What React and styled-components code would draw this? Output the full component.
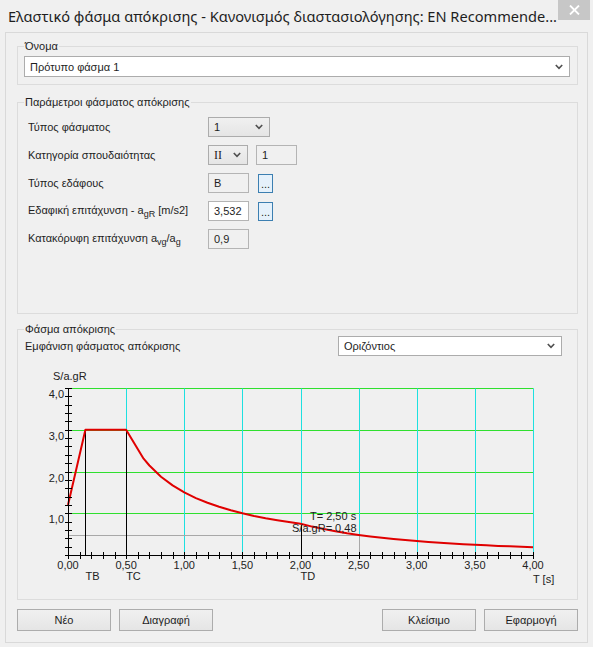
import React from "react";
import styled, { createGlobalStyle } from "styled-components";

const GlobalStyle = createGlobalStyle`
  body {
    margin: 0;
    background: #f0f0f0;
    font-family: "Liberation Sans", "Noto Sans", sans-serif;
  }
`;

const Window = styled.div`
  width: 593px;
  height: 647px;
  box-sizing: border-box;
  background: #f0f0f0;
  display: flex;
  flex-direction: column;
  overflow: hidden;
`;

const TitleBar = styled.div`
  height: 32px;
  flex-shrink: 0;
  display: flex;
  align-items: flex-start;
  justify-content: space-between;
  padding: 0 3px 0 8px;
`;

const Title = styled.div`
  flex: 1;
  min-width: 0;
  overflow: hidden;
  font-family: "Noto Sans", sans-serif;
  font-size: 14.6px;
  color: #1e1e1e;
  padding-top: 6px;
  white-space: nowrap;
`;

const CloseButton = styled.div`
  flex-shrink: 0;
  width: 32px;
  height: 20px;
  background: #c7c7c7;
  display: flex;
  align-items: center;
  justify-content: center;
`;

const Client = styled.div`
  flex: 1;
  margin: 0 5px 4px 5px;
  border: 1px solid #d9d9d9;
  display: flex;
  flex-direction: column;
  padding: 6px 9px 0 11px;
`;

const Group = styled.fieldset`
  margin: ${(p) => p.$top || 0}px 0 0 0;
  padding: 0 7px 7px 6px;
  border: 1px solid #dcdcdc;
  min-width: 0;
  box-sizing: border-box;
  height: ${(p) => (p.$height ? `${p.$height}px` : "auto")};
`;

const Legend = styled.legend`
  padding: 0 1px;
  font-size: 11px;
  line-height: 14px;
  color: #1e1e1e;
`;

const Combo = styled.div`
  box-sizing: border-box;
  width: ${(p) => (p.$width ? `${p.$width}px` : "auto")};
  height: ${(p) => p.$height || 20}px;
  margin-top: ${(p) => p.$mt || 0}px;
  border: 1px solid #acacac;
  background: ${(p) =>
    p.$flat ? "#ffffff" : "linear-gradient(#f0f0f0, #e5e5e5)"};
  display: flex;
  align-items: center;
  justify-content: space-between;
  padding: 0 6px 0 5px;
  font-size: ${(p) => (p.$serif ? 12 : 11)}px;
  color: #1e1e1e;
  font-family: ${(p) =>
    p.$serif ? '"Liberation Serif", serif' : '"Liberation Sans", sans-serif'};
`;

const Rows = styled.div`
  display: flex;
  flex-direction: column;
  gap: 8px;
  padding: 8px 0 0 4px;
`;

const Row = styled.div`
  display: grid;
  grid-template-columns: 180px auto;
  align-items: center;
  height: 20px;
`;

const Label = styled.div`
  font-size: 11px;
  color: #1e1e1e;
  white-space: nowrap;
  sub {
    font-size: 9px;
    vertical-align: -3px;
  }
`;

const Controls = styled.div`
  display: flex;
  align-items: center;
  gap: ${(p) => p.$gap || 8}px;
`;

const TextBox = styled.div`
  box-sizing: border-box;
  width: 41px;
  height: 20px;
  border: 1px solid #b4b4b4;
  background: ${(p) => (p.$editable ? "#ffffff" : "#f0f0f0")};
  font-size: 11px;
  color: #1e1e1e;
  display: flex;
  align-items: center;
  padding-left: 5px;
`;

const DotsButton = styled.div`
  box-sizing: border-box;
  width: 15px;
  height: 19px;
  border: 1px solid #3c7fb1;
  background: #e5f1fb;
  font-size: 11px;
  color: #1e1e1e;
  display: flex;
  align-items: flex-end;
  justify-content: center;
  padding-bottom: 4px;
  line-height: 8px;
`;

const HeaderRow = styled.div`
  display: flex;
  align-items: center;
  justify-content: space-between;
  padding-left: 1px;
  padding-right: 8px;
`;

const Chart = styled.svg`
  display: block;
  margin-top: 8px;
  font-family: "Liberation Sans", sans-serif;
`;

const ButtonBar = styled.div`
  display: flex;
  gap: 8px;
  margin-top: 9px;
`;

const Spacer = styled.div`
  flex: 1;
`;

const Button = styled.div`
  box-sizing: border-box;
  width: 94px;
  height: 22px;
  border: 1px solid #acacac;
  background: linear-gradient(#f0f0f0, #e5e5e5);
  font-size: 11px;
  color: #1e1e1e;
  display: flex;
  align-items: center;
  justify-content: center;
`;

const Chevron = () => (
  <svg width="8" height="6" viewBox="0 0 8 6">
    <polyline points="0.8,1 4,4.4 7.2,1" fill="none" stroke="#505050" strokeWidth="1.6" />
  </svg>
);

// chart coordinates, in page pixels
const X = (t) => 68 + t * 116.25;
const Y = (v) => 556 - v * 41.75;
const cx = (t) => Math.round(X(t)) + 0.5;
const cy = (v) => Math.round(Y(v)) + 0.5;

const spectrum = (t) => {
  if (t <= 0.15) return 1.2 * (1 + (t / 0.15) * 1.5);
  if (t <= 0.5) return 3.0;
  if (t <= 2.0) return 1.5 / t;
  return 3.0 / (t * t);
};

const fmt = (v, d) => v.toFixed(d).replace(".", ",");

function SpectrumChart() {
  const samples = [0, 0.15, 0.5, 0.65];
  for (let t = 0.7; t <= 4.001; t += 0.1) samples.push(Math.round(t * 100) / 100);
  const curve = samples.map((t) => `${X(t).toFixed(1)},${Y(spectrum(t)).toFixed(1)}`).join(" ");

  const xTicks = [];
  for (let i = 0; i <= 40; i++) xTicks.push(i / 10);
  const yTicks = [];
  for (let i = 0; i <= 20; i++) yTicks.push(i / 5);
  const xLabels = [0, 0.5, 1, 1.5, 2, 2.5, 3, 3.5, 4];

  return (
    <Chart width="546" height="228" viewBox="0 0 546 228">
      <g transform="translate(-24,-365)">
        {[1, 2, 3, 4].map((v) => (
          <line key={`h${v}`} x1={cx(0)} x2={cx(4)} y1={cy(v)} y2={cy(v)} stroke="#2fe02f" />
        ))}
        {[0.5, 1, 1.5, 2, 2.5, 3, 3.5, 4].map((t) => (
          <line key={`v${t}`} x1={cx(t)} x2={cx(t)} y1={cy(4)} y2={cy(0)} stroke="#1de0e0" />
        ))}

        <line x1={cx(0)} x2={cx(2.5)} y1={cy(0.48)} y2={cy(0.48)} stroke="#a8a8a8" />
        <line x1={cx(2.5)} x2={cx(2.5)} y1={cy(0.48)} y2={cy(0)} stroke="#a8a8a8" />

        <line x1={cx(0.15)} x2={cx(0.15)} y1={cy(3)} y2={cy(0)} stroke="#000" />
        <line x1={cx(0.5)} x2={cx(0.5)} y1={cy(3)} y2={cy(0)} stroke="#000" />
        <line x1={cx(2)} x2={cx(2)} y1={cy(0.75)} y2={cy(0)} stroke="#000" />

        <polyline points={curve} fill="none" stroke="#e00000" strokeWidth="2" strokeLinejoin="round" />

        <line x1={cx(0)} x2={cx(0)} y1={cy(4)} y2={cy(0)} stroke="#000" />
        <line x1={cx(0)} x2={cx(4)} y1={cy(0)} y2={cy(0)} stroke="#000" />
        {yTicks.map((v) => (
          <line key={`yt${v}`} x1={65} x2={72} y1={cy(v)} y2={cy(v)} stroke="#000" />
        ))}
        {xTicks.map((t) => (
          <line key={`xt${t}`} x1={cx(t)} x2={cx(t)} y1={553} y2={560} stroke="#000" />
        ))}

        <text x="53" y="381" fontSize="11" fill="#222">S/a.gR</text>
        {[1, 2, 3, 4].map((v) => (
          <text key={`yl${v}`} x="64" y={Y(v) + 10} fontSize="11" fill="#222" textAnchor="end">
            {fmt(v, 1)}
          </text>
        ))}
        {xLabels.map((t) => (
          <text key={`xl${t}`} x={X(t)} y="570" fontSize="11" fill="#222" textAnchor="middle">
            {fmt(t, 2)}
          </text>
        ))}
        <text x={X(0.15)} y="581" fontSize="11" fill="#222">TB</text>
        <text x={X(0.5)} y="581" fontSize="11" fill="#222">TC</text>
        <text x={X(2)} y="581" fontSize="11" fill="#222">TD</text>
        <text x="533" y="584" fontSize="11" fill="#222">T [s]</text>

        <text x="310" y="521" fontSize="11" fill="#222">T= 2,50 s</text>
        <text x="292" y="533" fontSize="11" fill="#222">S/a.gR= 0,48</text>
      </g>
    </Chart>
  );
}

export default function App() {
  return (
    <>
      <GlobalStyle />
      <Window>
        <TitleBar>
          <Title>Ελαστικό φάσμα απόκρισης - Κανονισμός διαστασιολόγησης: EN Recommende...</Title>
          <CloseButton>
            <svg width="11" height="10" viewBox="0 0 11 10">
              <path d="M1 0.5 L10 9.5 M10 0.5 L1 9.5" stroke="#ffffff" strokeWidth="1.8" />
            </svg>
          </CloseButton>
        </TitleBar>
        <Client>
          <Group>
            <Legend>Όνομα</Legend>
            <Combo $flat $height={21} $mt={3}>
              <span>Πρότυπο φάσμα 1</span>
              <Chevron />
            </Combo>
          </Group>

          <Group $top={10} $height={219}>
            <Legend>Παράμετροι φάσματος απόκρισης</Legend>
            <Rows>
              <Row>
                <Label>Τύπος φάσματος</Label>
                <Controls>
                  <Combo $width={62}>
                    <span>1</span>
                    <Chevron />
                  </Combo>
                </Controls>
              </Row>
              <Row>
                <Label>Κατηγορία σπουδαιότητας</Label>
                <Controls>
                  <Combo $width={40} $serif>
                    <span>II</span>
                    <Chevron />
                  </Combo>
                  <TextBox>1</TextBox>
                </Controls>
              </Row>
              <Row>
                <Label>Τύπος εδάφους</Label>
                <Controls $gap={9}>
                  <TextBox>B</TextBox>
                  <DotsButton>...</DotsButton>
                </Controls>
              </Row>
              <Row>
                <Label>
                  Εδαφική επιτάχυνση - a<sub>gR</sub> [m/s2]
                </Label>
                <Controls $gap={9}>
                  <TextBox $editable>3,532</TextBox>
                  <DotsButton>...</DotsButton>
                </Controls>
              </Row>
              <Row>
                <Label>
                  Κατακόρυφη επιτάχυνση a<sub>vg</sub>/a<sub>g</sub>
                </Label>
                <Controls>
                  <TextBox>0,9</TextBox>
                </Controls>
              </Row>
            </Rows>
          </Group>

          <Group $top={8}>
            <Legend>Φάσμα απόκρισης</Legend>
            <HeaderRow>
              <Label>Εμφάνιση φάσματος απόκρισης</Label>
              <Combo $flat $width={224}>
                <span>Οριζόντιος</span>
                <Chevron />
              </Combo>
            </HeaderRow>
            <SpectrumChart />
          </Group>

          <ButtonBar>
            <Button>Νέο</Button>
            <Button>Διαγραφή</Button>
            <Spacer />
            <Button>Κλείσιμο</Button>
            <Button>Εφαρμογή</Button>
          </ButtonBar>
        </Client>
      </Window>
    </>
  );
}
